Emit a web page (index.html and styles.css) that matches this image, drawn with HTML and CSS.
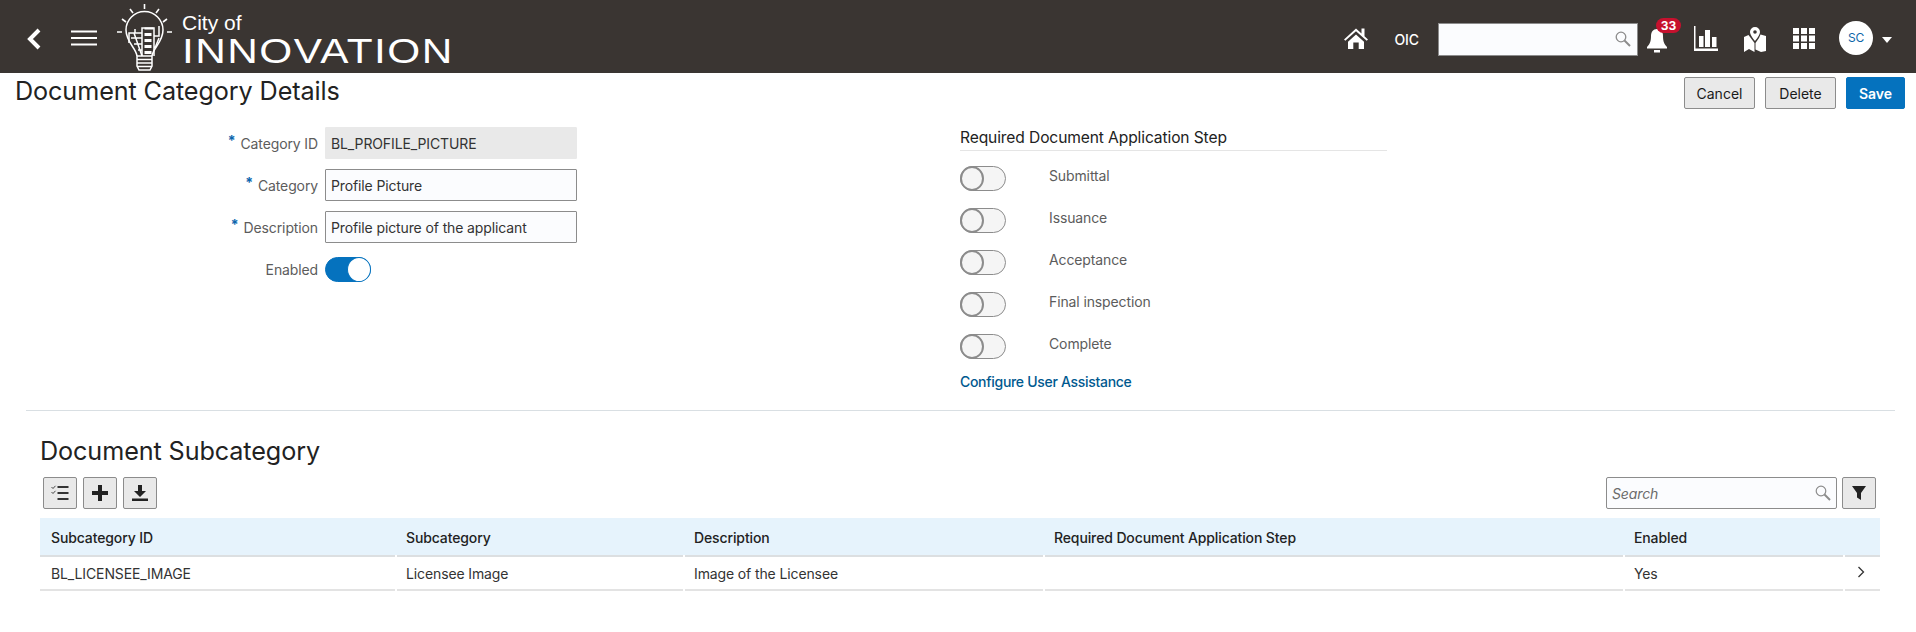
FILE: index.html
```html
<!DOCTYPE html>
<html lang="en">
<head>
<meta charset="utf-8">
<title>Document Category Details</title>
<link rel="stylesheet" href="styles.css">
</head>
<body>
<header class="topbar">
  <div class="brand">
    <svg class="ico-back" viewBox="0 0 16 24" width="16" height="24"><path d="M13 3 4 12l9 9" fill="none" stroke="#fff" stroke-width="4"/></svg>
    <svg class="ico-menu" viewBox="0 0 26 16" width="26" height="16"><path d="M0 1.500h26M0 8h26M0 14.500h26" stroke="#fff" stroke-width="1.800"/></svg>
    <svg class="logo-bulb" viewBox="0 0 56 70" width="56" height="70" fill="none" stroke="#fff" stroke-width="1.500">
      <path d="M20 54C19 46 9 40 9 28a18.500 18.500 0 0 1 37 0C46 40 36 46 35 54"/>
      <path d="M20 54h15v10l-2 4H22l-2-4zM20 57.500h15M20 61h15M20 64.500h15"/>
      <path d="M12 41V31h6v-4M25 31h-7l-3 0M17 31l8 23M14 36h11M17 42h8M21 48h4"/>
      <path d="M25 54V26h12v28M37 34h5V24M42 36l-4 10"/>
      <path d="M27.500 25.500h9v2h-9zM27.500 31h7v3h-7zM27.500 37h7v3h-7zM27.500 43h7v3h-7zM27.500 49h7v3h-7z" fill="#fff" stroke="none"/>
      <path d="M27.500 2v5M13 7l3 4M42 7l-3 4M5 17l4 3M50 17l-4 3M0 30h5M50 30h5" stroke-width="1.600"/>
    </svg>
    <div class="wordmark">
      <span class="wm-city">City of</span>
      <span class="wm-main">INNOVATION</span>
    </div>
  </div>
  <nav class="tools">
    <svg class="ico-home" viewBox="0 0 24 22" width="24" height="22"><path fill="#fff" d="M12 1.500 0 12.500l1.300 1.300L12 4.300l10.700 9.500 1.300-1.300-3.500-3.300V1.500h-3v5zM4 14.700 12 7.500l8 7.200V22h-5.300v-6.500H9.300V22H4z"/></svg>
    <span class="tool-text">OIC</span>
    <div class="top-search">
      <svg viewBox="0 0 16 16" width="16" height="16"><circle cx="6" cy="6" r="4.800" fill="none" stroke="#8c8c8c" stroke-width="1.300"/><path d="m9.500 9.500 5.500 5.500" stroke="#8c8c8c" stroke-width="2"/></svg>
    </div>
    <div class="bell">
      <svg viewBox="0 0 20 26" width="20" height="26"><path fill="#fff" d="M10 2c-4 0-6 3-6 7 0 6-1.500 8.500-4 11v1.500h20V20c-2.500-2.500-4-5-4-11 0-4-2-7-6-7zM7 23h6v2.500H7z"/></svg>
      <span class="badge">33</span>
    </div>
    <svg class="ico-chart" viewBox="0 0 24 25" width="24" height="25"><path fill="#fff" d="M0 0h1.500v22.500H24V25H0zM5 10h4.500v11H5zM11 4h5v17h-5zM18 11h4.500v10H18z"/></svg>
    <svg class="ico-map" viewBox="0 0 22 25" width="22" height="25"><path fill="#fff" fill-rule="evenodd" d="M11 0a5 5 0 0 1 5 5c0 3-5 9-5 9S6 8 6 5a5 5 0 0 1 5-5zm0 3.200a1.800 1.800 0 1 0 0 3.600 1.800 1.800 0 0 0 0-3.600zM0 10l4.500-2 6 8V25L5 22l-5 3zM22 9v15l-5 1-5.500-2.500V16l3.500-5 1.500-3.500z"/></svg>
    <svg class="ico-grid" viewBox="0 0 22 21" width="22" height="21"><path fill="#fff" d="M0 0h6v6H0zM8 0h6v6H8zM16 0h6v6h-6zM0 7.500h6v6H0zM8 7.500h6v6H8zM16 7.500h6v6h-6zM0 15h6v6H0zM8 15h6v6H8zM16 15h6v6h-6z"/></svg>
    <div class="avatar">SC</div>
    <span class="caret"></span>
  </nav>
</header>

<main class="page">
  <div class="title-row">
    <h1 class="page-title">Document Category Details</h1>
    <div class="actions">
      <button class="btn">Cancel</button>
      <button class="btn">Delete</button>
      <button class="btn btn-primary">Save</button>
    </div>
  </div>

  <section class="details">
    <div class="form">
      <div class="field"><label class="label"><span class="req">*</span>Category ID</label><div class="input readonly">BL_PROFILE_PICTURE</div></div>
      <div class="field"><label class="label"><span class="req">*</span>Category</label><div class="input">Profile Picture</div></div>
      <div class="field"><label class="label"><span class="req">*</span>Description</label><div class="input">Profile picture of the applicant</div></div>
      <div class="field"><label class="label">Enabled</label><span class="switch on"><span class="knob"></span></span></div>
    </div>
    <div class="steps">
      <h2 class="steps-title">Required Document Application Step</h2>
      <div class="step"><span class="switch"><span class="knob"></span></span><span class="step-label">Submittal</span></div>
      <div class="step"><span class="switch"><span class="knob"></span></span><span class="step-label">Issuance</span></div>
      <div class="step"><span class="switch"><span class="knob"></span></span><span class="step-label">Acceptance</span></div>
      <div class="step"><span class="switch"><span class="knob"></span></span><span class="step-label">Final inspection</span></div>
      <div class="step"><span class="switch"><span class="knob"></span></span><span class="step-label">Complete</span></div>
      <a class="link" href="#">Configure User Assistance</a>
    </div>
  </section>

  <hr class="divider">

  <section class="sub">
    <h2 class="sub-title">Document Subcategory</h2>
    <div class="toolbar">
      <div class="tb-left">
        <button class="icon-btn"><svg viewBox="0 0 18 16" width="18" height="16"><path d="M6.500 2h11M6.500 8h11M6.500 14h11" stroke="#333" stroke-width="1.800"/><path d="m0.500 2 1.500 1.500L4.500 0.800M0.500 7l1.500 1.500L4.500 5.800" fill="none" stroke="#333" stroke-width="0.900"/></svg></button>
        <button class="icon-btn"><svg viewBox="0 0 16 16" width="16" height="16"><path d="M8 0v16M0 8h16" stroke="#222" stroke-width="4"/></svg></button>
        <button class="icon-btn"><svg viewBox="0 0 16 16" width="16" height="16"><path fill="#222" d="M6 0h4v6h4l-6 6-6-6h4zM0 13.500h16V16H0z"/></svg></button>
      </div>
      <div class="tb-right">
        <div class="search"><span class="search-ph">Search</span><svg viewBox="0 0 16 16" width="16" height="16"><circle cx="6" cy="6" r="4.800" fill="none" stroke="#8c8c8c" stroke-width="1.200"/><path d="m9.500 9.500 5.500 5.500" stroke="#8c8c8c" stroke-width="2"/></svg></div>
        <button class="icon-btn"><svg viewBox="0 0 16 16" width="16" height="16"><path fill="#222" d="M0 1h14L9 8v7l-4-2.500V8z" transform="translate(1)"/></svg></button>
      </div>
    </div>
    <table class="grid">
      <thead>
        <tr>
          <th class="c1">Subcategory ID</th>
          <th class="c2">Subcategory</th>
          <th class="c3">Description</th>
          <th class="c4">Required Document Application Step</th>
          <th class="c5">Enabled</th>
          <th class="c6"></th>
        </tr>
      </thead>
      <tbody>
        <tr>
          <td>BL_LICENSEE_IMAGE</td>
          <td>Licensee Image</td>
          <td>Image of the Licensee</td>
          <td></td>
          <td>Yes</td>
          <td class="chev-cell"><svg class="chev" viewBox="0 0 8 12" width="8" height="12"><path d="m1.500 1 5 5-5 5" fill="none" stroke="#333" stroke-width="1.300"/></svg></td>
        </tr>
      </tbody>
    </table>
  </section>
</main>
</body>
</html>
```
FILE: styles.css
```css
* { box-sizing: border-box; }
html, body { margin: 0; padding: 0; }
body { font-family: Inter, "Liberation Sans", sans-serif; font-size: 14px; letter-spacing: -0.12px; color: #333; background: #fff; height: 632px; overflow: hidden; }

.topbar { height: 73px; background: #3a3532; display: flex; justify-content: space-between; align-items: center; padding: 0 24px 0 25px; }
.brand { display: flex; align-items: center; }
.ico-back { margin: 5px 0 0 1px; }
.ico-menu { margin: 3px 0 0 29px; }
.logo-bulb { margin: 0 0 0 20px; }
.wordmark { display: flex; flex-direction: column; margin-left: 9px; color: #fff; font-family: "Liberation Sans", sans-serif; line-height: 1; letter-spacing: 0; }
.wm-city { font-size: 21px; margin-top: 6px; }
.wm-main { font-size: 35px; letter-spacing: 1.200px; margin-top: 0; transform: scaleX(1.21); transform-origin: left center; }

.tools { display: flex; align-items: center; color: #fff; }
.ico-home { margin-right: 26.500px; margin-top: 3px; }
.tool-text { width: 23px; font-size: 14px; font-weight: 500; margin-right: 20.500px; margin-top: 5px; }
.top-search { width: 200px; height: 33px; background: #fbfcfe; border: 1px solid #8c8c8c; display: flex; align-items: center; justify-content: flex-end; padding-right: 6px; margin-right: 9px; margin-top: 5px; }
.bell { position: relative; width: 20px; height: 26px; margin-right: 27px; margin-top: 6px; }
.badge { position: absolute; left: 9px; top: -9px; width: 25px; height: 15px; border-radius: 8px; background: #c6112e; color: #fff; font-size: 12px; font-weight: 700; line-height: 15px; text-align: center; letter-spacing: 0; }
.ico-chart { margin-right: 26px; margin-top: 4px; }
.ico-map { margin-right: 27px; margin-top: 5px; }
.ico-grid { margin-right: 24px; margin-top: 4px; }
.avatar { width: 34px; height: 34px; border-radius: 50%; background: #fff; color: #0d66a8; font-size: 12px; display: flex; align-items: center; justify-content: center; margin-top: 2px; }
.caret { width: 0; height: 0; border-left: 5px solid transparent; border-right: 5px solid transparent; border-top: 6px solid #fff; margin: 6px 0 0 9px; }

.title-row { display: flex; justify-content: space-between; padding: 4px 11px 0 15px; height: 54px; }
.page-title { margin: 0; font-size: 25.200px; font-weight: 400; line-height: 29px; color: #222; letter-spacing: -0.1px; }
.actions { display: flex; gap: 10px; }
.btn { height: 32px; width: 71px; padding: 0; background: #e9e9e9; border: 1px solid #8c8c8c; border-radius: 2px; font: 400 14px Inter, "Liberation Sans", sans-serif; color: #1a1a1a; }
.btn-primary { width: 59px; background: #0572be; border-color: #0572be; color: #fff; font-weight: 600; }

.details { display: flex; height: 283px; }
.form { width: 960px; display: flex; flex-direction: column; gap: 10px; }
.field { display: flex; align-items: center; height: 32px; }
.label { width: 318px; text-align: right; color: #5c5c5c; margin-right: 7px; }
.req { color: #0b65ad; font-weight: 700; margin-right: 5px; position: relative; top: -3px; }
.input { width: 252px; height: 32px; border: 1px solid #8c8c8c; border-radius: 1px; background: #fbfcfe; padding: 0 5px; line-height: 31px; color: #333; }
.input.readonly { background: #e9e9e9; border-color: #e9e9e9; }

.switch { position: relative; display: inline-block; width: 46px; height: 25px; border-radius: 13px; background: #f5f5f5; border: 1px solid #8c8c8c; flex: none; }
.knob { position: absolute; left: -1px; top: -1px; width: 24px; height: 25px; border-radius: 50%; background: #f5f5f5; border: 2px solid #8c8c8c; }
.switch.on { background: #0572be; border-color: #0572be; }
.switch.on .knob { left: 21px; width: 24px; background: #fff; border: 1px solid #0572be; }

.steps { width: 427px; }
.steps-title { margin: 0 0 15px; height: 24px; font-size: 15.600px; font-weight: 400; line-height: 21px; color: #222; border-bottom: 1px solid #e5e5e5; }
.step { display: flex; align-items: flex-start; height: 25px; margin-bottom: 17px; }
.step-label { margin-left: 43px; line-height: 19px; color: #5c5c5c; }
.link { display: block; margin-top: -3px; color: #00598f; font-weight: 500; letter-spacing: -0.3px; text-decoration: none; line-height: 17px; }

.divider { margin: 0 21px 0 26px; border: 0; border-top: 1px solid #d9dfe3; }

.sub { padding: 0 36px 0 40px; }
.sub-title { margin: 24px 0 0; font-size: 25.200px; font-weight: 400; line-height: 32px; color: #222; letter-spacing: -0.1px; }
.toolbar { display: flex; justify-content: space-between; margin-top: 10px; padding: 0 4px 0 3px; }
.tb-left { display: flex; gap: 6px; }
.tb-right { display: flex; gap: 5px; }
.icon-btn { width: 34px; height: 32px; padding: 0; display: flex; align-items: center; justify-content: center; background: #e9e9e9; border: 1px solid #8c8c8c; border-radius: 2px; }
.search { width: 231px; height: 32px; border: 1px solid #8c8c8c; border-radius: 2px; background: #fbfcfe; display: flex; align-items: center; justify-content: space-between; padding: 0 5px; }
.search-ph { font-style: italic; color: #6b6b6b; }

.grid { width: 1840px; margin-top: 9px; border-collapse: separate; border-spacing: 0; table-layout: fixed; }
.grid th { position: relative; height: 39px; background: #e6f3fc; font-weight: 500; color: #222; text-align: left; padding: 1px 11px 0; border-bottom: 2px solid #dcdfe1; }
.grid td { position: relative; height: 34px; padding: 1px 11px 0; color: #333; border-bottom: 2px solid #e3e3e3; }
.grid th + th::before, .grid td + td::before { content: ""; position: absolute; left: 0; bottom: -2px; width: 2px; height: 2px; background: #fff; }
.c1 { width: 355px; }
.c2 { width: 288px; }
.c3 { width: 360px; }
.c4 { width: 580px; }
.c5 { width: 220px; }
.c6 { width: 37px; }
.chev-cell { text-align: left; }
.chev { display: block; margin: -3px 0 0 3px; }
```
